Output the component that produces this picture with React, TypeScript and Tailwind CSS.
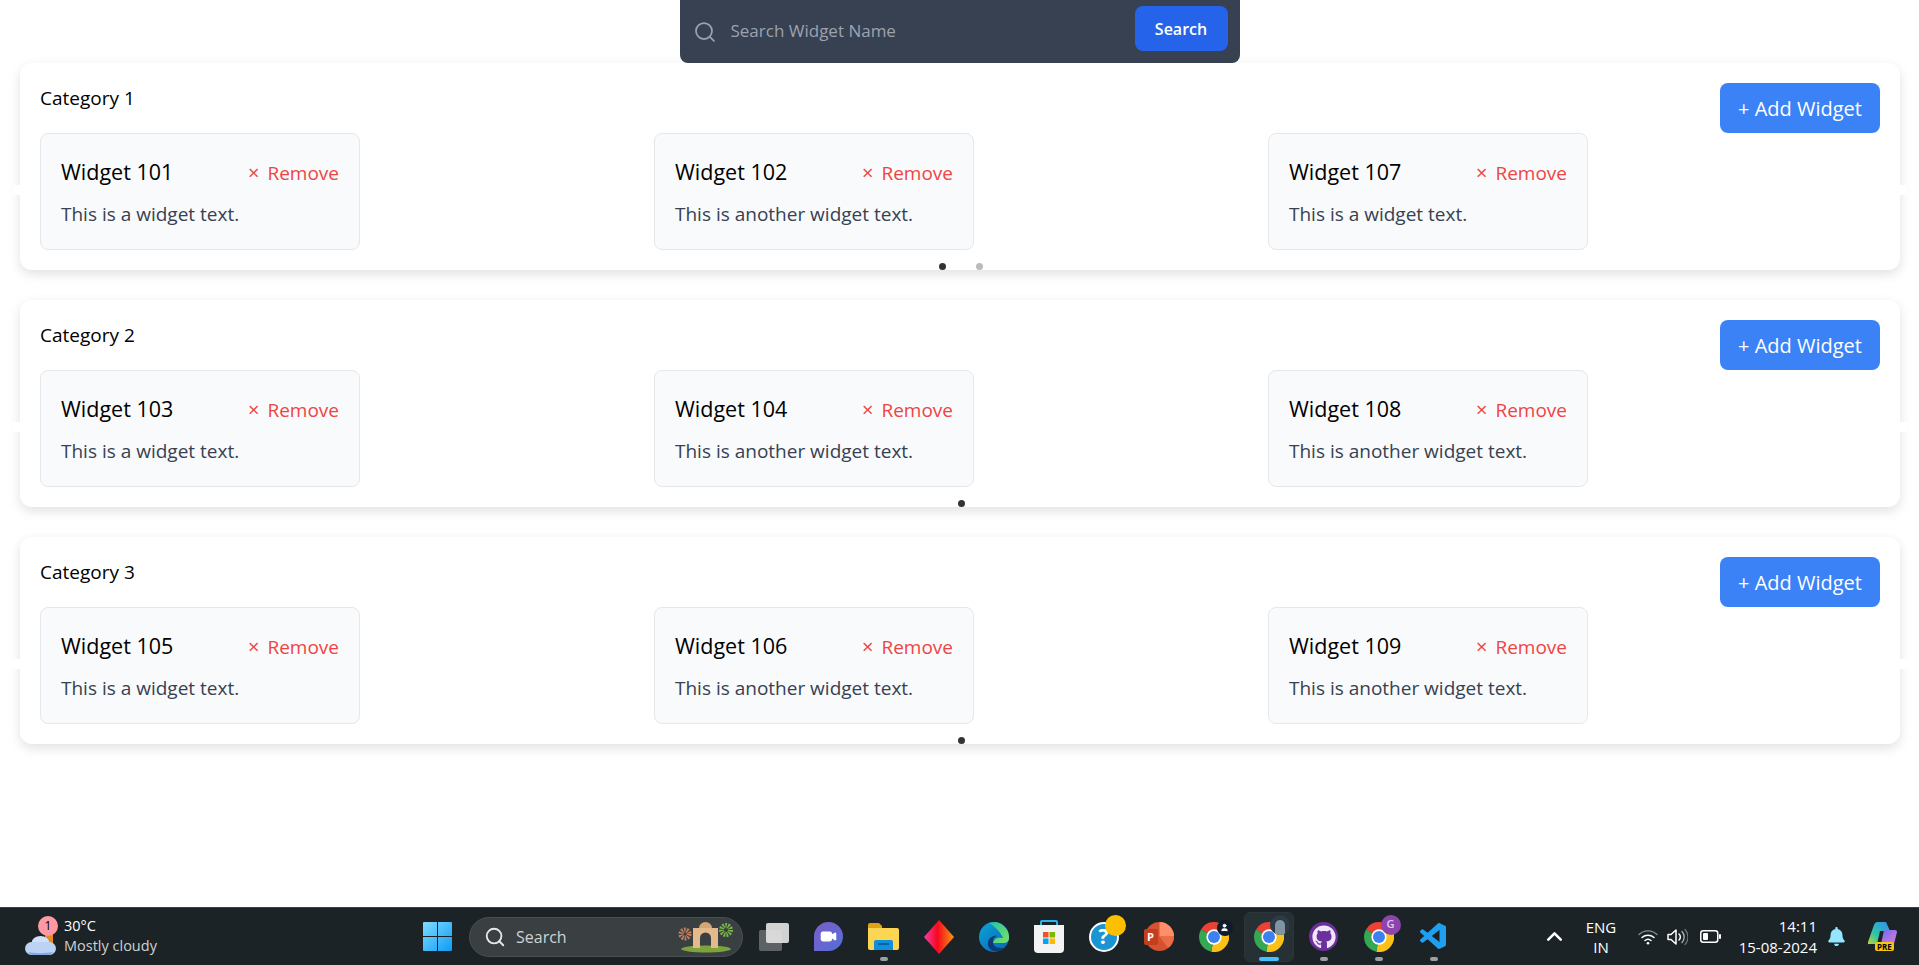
import { Search, ChevronUp, Video, User } from "lucide-react";
import { FaGithub, FaBell } from "react-icons/fa";
import { VscVscode } from "react-icons/vsc";

const uiFont = { fontFamily: '"Open Sans", "Noto Sans", sans-serif' };

type Widget = { name: string; text: string };

const categories: { title: string; widgets: Widget[]; pages: number }[] = [
  {
    title: "Category 1",
    pages: 2,
    widgets: [
      { name: "Widget 101", text: "This is a widget text." },
      { name: "Widget 102", text: "This is another widget text." },
      { name: "Widget 107", text: "This is a widget text." },
    ],
  },
  {
    title: "Category 2",
    pages: 1,
    widgets: [
      { name: "Widget 103", text: "This is a widget text." },
      { name: "Widget 104", text: "This is another widget text." },
      { name: "Widget 108", text: "This is another widget text." },
    ],
  },
  {
    title: "Category 3",
    pages: 1,
    widgets: [
      { name: "Widget 105", text: "This is a widget text." },
      { name: "Widget 106", text: "This is another widget text." },
      { name: "Widget 109", text: "This is another widget text." },
    ],
  },
];

function WidgetCard({ widget }: { widget: Widget }) {
  return (
    <div className="h-[117px] w-[320px] rounded-lg border border-[#e5e7eb] bg-[#f9fafb] px-5 pt-[23px]">
      <div className="flex items-center justify-between">
        <h3 className="text-[21.5px] leading-[30px] font-medium text-black">{widget.name}</h3>
        <button type="button" className="mt-[2px] text-[19px] leading-[26px] text-[#ef4444]">
          <span className="mr-[8px] text-[20px]">×</span>Remove
        </button>
      </div>
      <p className="mt-[14px] text-[19px] leading-[26px] text-[#374151]">{widget.text}</p>
    </div>
  );
}

function CategoryCard({ title, widgets, pages }: { title: string; widgets: Widget[]; pages: number }) {
  return (
    <section className="relative ml-5 mr-[19px] h-[207px] rounded-xl bg-white px-5 pt-5 shadow-[0_4px_12px_rgba(0,0,0,0.12)]">
      {/* slider arrows, white on white, only show where they cut the shadow */}
      <span className="absolute -left-[8px] top-[122px] h-[10px] w-[8px] bg-white" />
      <span className="absolute -right-[8px] top-[122px] h-[10px] w-[8px] bg-white" />
      <div className="flex h-[50px] items-start justify-between">
        <h2 className="mt-[2px] text-[19px] leading-[27px] text-black">{title}</h2>
        <button type="button" className="h-[50px] w-[160px] rounded-lg bg-[#3b82f6] pt-[2px] text-[20px] text-white">
          + Add Widget
        </button>
      </div>
      <div className="grid grid-cols-[repeat(3,614px)]">
        {widgets.map((w) => (
          <WidgetCard key={w.name} widget={w} />
        ))}
      </div>
      <div className="absolute bottom-0 left-[1px] flex w-full justify-center gap-[30px]">
        {Array.from({ length: pages }).map((_, i) => (
          <span key={i} className={`h-[7px] w-[7px] rounded-full ${i === 0 ? "bg-[#333]" : "bg-[#bbb]"}`} />
        ))}
      </div>
    </section>
  );
}

function WindowsLogo() {
  return (
    <svg width="29" height="29" viewBox="0 0 29 29">
      <defs>
        <linearGradient id="win" x1="0" y1="0" x2="1" y2="1">
          <stop offset="0" stopColor="#7fdcff" />
          <stop offset="1" stopColor="#0f9bf5" />
        </linearGradient>
      </defs>
      <path d="M1 0h13v14H0V1a1 1 0 0 1 1-1zM15 0H28a1 1 0 0 1 1 1v13H15zM0 15h14V29H1a1 1 0 0 1-1-1zM15 15H29V28a1 1 0 0 1-1 1H15z" fill="url(#win)" />
    </svg>
  );
}

function Chrome() {
  return (
    <svg width="30" height="30" viewBox="1 1 22 22">
      <path d="M12 12L2.47 6.5A11 11 0 0 1 21.53 6.5Z" fill="#ea4335" />
      <path d="M12 12L21.53 6.5A11 11 0 0 1 10 22.8Z" fill="#fbc116" />
      <path d="M12 12L10 22.8A11 11 0 0 1 2.47 6.5Z" fill="#34a853" />
      <circle cx="12" cy="12" r="5.6" fill="#fff" />
      <circle cx="12" cy="12" r="4.4" fill="#3b82f0" />
    </svg>
  );
}

function Slot({ children, dot, active }: { children: React.ReactNode; dot?: boolean; active?: boolean }) {
  return (
    <div className="relative flex h-[50px] w-[55px] items-center justify-center">
      {active && <div className="absolute inset-y-0 left-[3px] right-[2px] rounded-md border border-[#2c3539] bg-[#263136]" />}
      <div className="relative flex items-center justify-center">{children}</div>
      {dot && <span className="absolute bottom-[1px] left-1/2 h-[4px] w-[8px] -translate-x-1/2 rounded-full bg-[#9aa0a4]" />}
      {active && <span className="absolute bottom-[1px] left-1/2 h-[4px] w-[20px] -translate-x-1/2 rounded-full bg-[#47c0ff]" />}
    </div>
  );
}

function Taskbar() {
  return (
    <footer className="relative flex h-[58px] items-center border-t border-[#3a3f42] bg-[#1c2327] text-white">
      {/* weather */}
      <div className="flex w-[410px] items-center pl-[25px]">
        <div className="relative h-[40px] w-[39px]">
          <svg className="absolute bottom-[1px] left-0" width="31" height="24" viewBox="0 0 31 24">
            <path d="M20 0h8v12h-8z" fill="#e98a1f" />
            <ellipse cx="15.5" cy="11" rx="9" ry="7" fill="#cfe0f7" />
            <rect x="0" y="10" width="31" height="13" rx="6.5" fill="#bcd3f3" />
            <path d="M3 20c6 1.500 18 1.500 25 0a6 6 0 0 1-4 3H7a6 6 0 0 1-4-3z" fill="#86a9e0" />
          </svg>
          <span className="absolute left-[13px] top-[-1px] flex h-[20px] w-[20px] items-center justify-center rounded-full bg-[#ff9aa5] text-[12px] text-black">
            1
          </span>
        </div>
        <div className="-mt-[2px] text-[14.5px] leading-[20px]">
          <div>30°C</div>
          <div className="text-[#d0d2d3]">Mostly cloudy</div>
        </div>
      </div>

      <div className="flex w-[55px] justify-center">
        <WindowsLogo />
      </div>

      {/* search pill */}
      <div className="ml-[4px] flex h-[40px] w-[274px] items-center rounded-full border border-[#4a4e51] bg-[#3a3f42] pl-[14px] pr-[8px]">
        <Search size={22} color="#e8e8e8" />
        <span className="ml-[10px] flex-1 text-[16px] text-[#d0d2d3]">Search</span>
        <svg width="56" height="32" viewBox="0 0 56 32">
          <ellipse cx="28" cy="28" rx="25" ry="3.500" fill="#7da33b" />
          <path d="M15 7h25v20h-7V17a5.500 5.500 0 0 0-11 0v10h-7z" fill="#e4b98b" />
          <path d="M21 7a6.500 6 0 0 1 13 0z" fill="#d6a676" />
          <circle cx="7" cy="13" r="4" fill="none" stroke="#c9805a" strokeWidth="5" strokeDasharray="1.500 1" />
          <circle cx="48" cy="9" r="4.500" fill="none" stroke="#79b848" strokeWidth="5" strokeDasharray="1.500 1" />
        </svg>
      </div>

      {/* task view */}
      <div className="ml-[3px] flex w-[55px] justify-center">
        <div className="relative h-[28px] w-[30px]">
          <div className="absolute bottom-0 left-0 h-[21px] w-[23px] rounded-[2px] bg-[#5f6265]" />
          <div className="absolute right-0 top-0 h-[20px] w-[23px] rounded-[2px] bg-[#e6e6e6]/90" />
        </div>
      </div>

      <Slot>
        <div className="flex h-[29px] w-[29px] items-center justify-center rounded-full rounded-bl-[4px] bg-linear-to-br from-[#7d5cc6] to-[#4f6fd8]">
          <Video size={17} color="#fff" fill="#fff" />
        </div>
      </Slot>
      <Slot dot>
        <svg width="31" height="27" viewBox="0 0 31 27">
          <path d="M0 2a2 2 0 0 1 2-2h9l3 3v5H0z" fill="#e2a312" />
          <path d="M0 5h29a2 2 0 0 1 2 2v18a2 2 0 0 1-2 2H2a2 2 0 0 1-2-2z" fill="#fcd652" />
          <path d="M6 27v-8a2 2 0 0 1 2-2h15a2 2 0 0 1 2 2v8z" fill="#0f8fdc" />
          <path d="M10 21h11" stroke="#07558f" strokeWidth="1.5" />
        </svg>
      </Slot>
      <Slot>
        <svg width="30" height="34" viewBox="0 0 30 34">
          <defs>
            <linearGradient id="dia" x1="0" y1="0" x2="1" y2="0">
              <stop offset="0" stopColor="#f43fa8" />
              <stop offset="0.45" stopColor="#f8071f" />
              <stop offset="1" stopColor="#f99a0d" />
            </linearGradient>
          </defs>
          <path d="M15 0l15 17-15 17L0 17z" fill="url(#dia)" />
        </svg>
      </Slot>
      <Slot>
        <svg width="30" height="30" viewBox="0 0 30 30">
          <defs>
            <linearGradient id="edge" x1="0" y1="0" x2="1" y2="1">
              <stop offset="0" stopColor="#0aa5d6" />
              <stop offset="1" stopColor="#0b62b5" />
            </linearGradient>
            <linearGradient id="edgeg" x1="0" y1="0" x2="1" y2="1">
              <stop offset="0" stopColor="#25c2a0" />
              <stop offset="1" stopColor="#7be06a" />
            </linearGradient>
          </defs>
          <circle cx="15" cy="15" r="15" fill="url(#edge)" />
          <path d="M10 1a15 15 0 0 1 20 15c0 4-3 5-6 5H14c1-5 5-6 10-5-2-5-8-12-14-15z" fill="url(#edgeg)" />
          <path d="M20 29c-7 2-12-3-11-9 1-4 5-7 9-6-3 1-4 3-4 6 0 3 3 6 8 6 1 0 3 0 4-1-2 2-4 3-6 4z" fill="#0d3a78" />
        </svg>
      </Slot>
      <Slot>
        <svg width="30" height="33" viewBox="0 0 30 33">
          <path d="M7 6V2a1 1 0 0 1 1-1h14a1 1 0 0 1 1 1v4" fill="none" stroke="#2bb3ee" strokeWidth="2" />
          <path d="M0 5h30v24a4 4 0 0 1-4 4H4a4 4 0 0 1-4-4z" fill="#f3f3f3" />
          <rect x="9" y="12" width="5.5" height="5.5" fill="#f25022" />
          <rect x="15.5" y="12" width="5.5" height="5.5" fill="#7fba00" />
          <rect x="9" y="18.5" width="5.5" height="5.5" fill="#00a4ef" />
          <rect x="15.5" y="18.5" width="5.5" height="5.5" fill="#ffb900" />
        </svg>
      </Slot>
      <Slot>
        <div className="relative">
          <div className="flex h-[30px] w-[30px] items-center justify-center rounded-full border-2 border-white bg-[#1a94d2] text-[21px] leading-none font-bold text-white">
            ?
          </div>
          <span className="absolute -right-[7px] -top-[7px] h-[21px] w-[21px] rounded-full bg-[#fdc000]" />
        </div>
      </Slot>
      <Slot>
        <div className="relative h-[29px] w-[30px]">
          <svg className="absolute inset-0" width="30" height="29" viewBox="0 0 30 29">
            <circle cx="15.5" cy="14.5" r="14.5" fill="#d35230" />
            <path d="M15.5 0a14.5 14.5 0 0 1 14.5 14.5H15.5z" fill="#ff8f6b" />
            <path d="M15.5 14.5H30A14.5 14.5 0 0 1 24 26z" fill="#ed6c47" />
          </svg>
          <span className="absolute left-0 top-[7px] flex h-[16px] w-[14px] items-center justify-center rounded-[2px] bg-[#c43e1c] text-[11px] font-bold text-white">
            P
          </span>
        </div>
      </Slot>
      <Slot>
        <div className="relative">
          <Chrome />
          <span className="absolute -right-[4px] -top-[2px] flex h-[16px] w-[16px] items-center justify-center rounded-full bg-[#0f1c2b]">
            <User size={9} color="#fff" fill="#fff" />
          </span>
        </div>
      </Slot>
      <Slot active>
        <div className="relative">
          <Chrome />
          <span className="absolute -right-[6px] -top-[7px] h-[20px] w-[20px] overflow-hidden rounded-full bg-[#2b3a45]">
            <span className="absolute bottom-0 left-[5px] h-[15px] w-[10px] rounded-t-full bg-[#7f93a3]" />
          </span>
        </div>
      </Slot>
      <Slot dot>
        <div className="flex h-[29px] w-[29px] items-center justify-center rounded-full bg-[#6c2f9e]">
          <FaGithub size={24} color="#f0e6f7" />
        </div>
      </Slot>
      <Slot dot>
        <div className="relative">
          <Chrome />
          <span className="absolute -right-[7px] -top-[7px] flex h-[20px] w-[20px] items-center justify-center rounded-full bg-[#8e44ad] text-[11px] font-semibold text-[#e6c9f2]">
            G
          </span>
        </div>
      </Slot>
      <Slot dot>
        <VscVscode size={32} color="#1f9ff0" />
      </Slot>

      {/* tray */}
      <div className="ml-[78px] flex w-[30px] justify-center">
        <ChevronUp size={25} color="#fff" strokeWidth={2.5} />
      </div>
      <div className="ml-[7px] w-[50px] text-center text-[15px] leading-[20px]">
        <div>ENG</div>
        <div>IN</div>
      </div>
      <div className="ml-[12px] flex items-center gap-[9px]">
        <svg width="20" height="16" viewBox="0 0 20 16" fill="none" strokeLinecap="round">
          <path d="M1 5.500a13 13 0 0 1 18 0" stroke="#8a8d8f" strokeWidth="1.300" />
          <path d="M4 8.500a9 9 0 0 1 12 0" stroke="#fff" strokeWidth="1.500" />
          <path d="M7 11.500a4.500 4.500 0 0 1 6 0" stroke="#fff" strokeWidth="1.500" />
          <circle cx="10" cy="14.300" r="1.300" fill="#fff" />
        </svg>
        <svg width="21" height="18" viewBox="0 0 21 18" fill="none" strokeLinecap="round" strokeLinejoin="round">
          <path d="M1 6.500h3L9 2v14l-5-4.500H1z" stroke="#fff" strokeWidth="1.500" />
          <path d="M12 6a4 4 0 0 1 0 6" stroke="#fff" strokeWidth="1.500" />
          <path d="M15 3.500a8 8 0 0 1 0 11" stroke="#b5b7b8" strokeWidth="1.300" />
          <path d="M18 1.500a11 11 0 0 1 0 15" stroke="#6f7274" strokeWidth="1.200" />
        </svg>
        <svg className="ml-[3px]" width="21" height="13" viewBox="0 0 21 13">
          <rect x="0.75" y="0.75" width="17" height="11.5" rx="2.5" fill="none" stroke="#fff" strokeWidth="1.5" />
          <rect x="3" y="3" width="5" height="7" rx="1" fill="#fff" />
          <rect x="19" y="4" width="2" height="5" rx="1" fill="#fff" />
        </svg>
      </div>
      <div className="ml-[12px] w-[84px] text-right text-[15px] leading-[21px]">
        <div>14:11</div>
        <div>15-08-2024</div>
      </div>
      <div className="ml-[10px]">
        <FaBell size={19} color="#93e6ff" />
      </div>
      <div className="relative ml-[22px] h-[29px] w-[29px]">
        <svg width="29" height="24" viewBox="0 0 29 24">
          <defs>
            <linearGradient id="copl" x1="0" y1="1" x2="1" y2="0">
              <stop offset="0" stopColor="#c7d52b" />
              <stop offset="0.4" stopColor="#2fc4a8" />
              <stop offset="1" stopColor="#2f8ff0" />
            </linearGradient>
            <linearGradient id="copr" x1="0" y1="0" x2="1" y2="1">
              <stop offset="0" stopColor="#6a6cf0" />
              <stop offset="1" stopColor="#e27ad8" />
            </linearGradient>
          </defs>
          <path d="M9 0h9l4 9H12l-3 13H1a1 1 0 0 1-1-2L6 3a4 4 0 0 1 3-3z" fill="url(#copl)" />
          <path d="M16 8h11a2 2 0 0 1 2 2l-3 12H13z" fill="url(#copr)" />
        </svg>
        <span className="absolute bottom-0 left-[7px] rounded-[2px] bg-[#f9c513] px-[2px] text-[8px] leading-[9px] font-bold text-black">
          PRE
        </span>
      </div>
    </footer>
  );
}

export default function App() {
  return (
    <div className="h-[965px] overflow-hidden bg-white" style={uiFont}>
      <main className="h-[907px]">
        <div className="relative z-10 mx-auto flex h-[63px] w-[560px] items-center rounded-b-lg bg-[#374151] pl-[13px] pr-3">
          <Search size={24} color="#9ca3af" strokeWidth={1.75} />
          <input
            placeholder="Search Widget Name"
            className="mb-[2px] ml-[14px] flex-1 bg-transparent text-[17px] text-gray-300 outline-none placeholder:text-[#9ca3af]"
          />
          <button type="button" className="-mt-[6px] h-[45px] w-[93px] rounded-lg bg-[#2563eb] text-[16px] font-semibold text-white">
            Search
          </button>
        </div>
        <div className="flex flex-col gap-[30px]">
          {categories.map((c) => (
            <CategoryCard key={c.title} {...c} />
          ))}
        </div>
      </main>
      <Taskbar />
    </div>
  );
}
